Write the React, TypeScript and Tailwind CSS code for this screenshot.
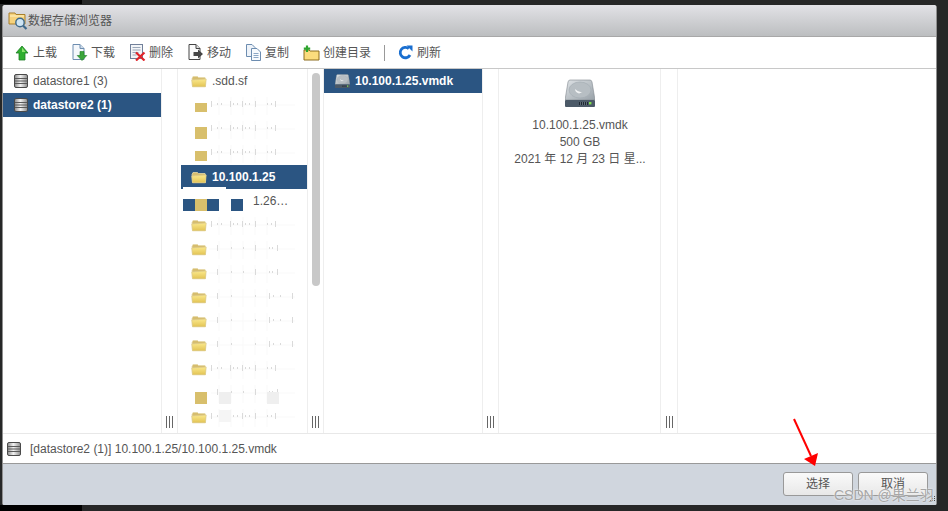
import React from "react";

const FONT = { fontFamily: '"Liberation Sans", "Noto Sans CJK SC", sans-serif' };

function Db({ className = "" }: { className?: string }) {
  return (
    <svg width="15" height="14" viewBox="0 0 15 14" className={className}>
      <defs>
        <linearGradient id="dbg" x1="0" x2="1" y1="0" y2="0">
          <stop offset="0" stopColor="#8a8a8a" />
          <stop offset="0.45" stopColor="#f2f2f2" />
          <stop offset="1" stopColor="#8e8e8e" />
        </linearGradient>
      </defs>
      <rect x="0.5" y="0.5" width="13" height="13" rx="1.5" fill="url(#dbg)" stroke="#4a4a4a" />
      <path d="M1 4.5h12M1 7h12M1 9.5h12" stroke="#5a5a5a" strokeWidth="1" />
    </svg>
  );
}

function Folder() {
  return (
    <svg width="16" height="13" viewBox="0 0 16 13" className="shrink-0">
      <defs>
        <linearGradient id="fog" x1="0" x2="0" y1="0" y2="1">
          <stop offset="0" stopColor="#fbe98c" />
          <stop offset="1" stopColor="#e2c354" />
        </linearGradient>
      </defs>
      <path d="M1 3.5 L2 1.5 H6.5 L7.5 2.5 H14 L14.5 4 V11.5 H1.5 Z" fill="#d6bd6f" stroke="#e6d9a8" strokeWidth="0.8" />
      <path d="M0.8 5 L15.2 4 L14.4 11.8 H1.5 Z" fill="url(#fog)" stroke="#dccb8c" strokeWidth="0.7" />
    </svg>
  );
}

function Disk({ size = 15 }: { size?: number }) {
  return (
    <svg width={size} height={(size * 28) / 30} viewBox="0 0 30 28" className="shrink-0">
      <defs>
        <linearGradient id="dg" x1="0" x2="1" y1="0" y2="1">
          <stop offset="0" stopColor="#dfe3e6" />
          <stop offset="1" stopColor="#98a1a8" />
        </linearGradient>
      </defs>
      <path d="M5 1 H25 Q26.5 1 27 3 L30 21 H0 L3 3 Q3.5 1 5 1 Z" fill="url(#dg)" stroke="#7f878d" strokeWidth="0.6" />
      <ellipse cx="15" cy="11" rx="11" ry="8" fill="#b7bec3" stroke="#a3abb1" strokeWidth="0.6" />
      <path d="M10 10 Q14 14 18 13 L14 14.5 Q10 13 10 10 Z" fill="#f1f3f4" />
      <rect x="0" y="21" width="30" height="7" rx="1" fill="#4b5967" />
      <rect x="14" y="23" width="9" height="3" fill="#1f2933" />
      <path d="M15.5 23v3M17.5 23v3M19.5 23v3M21.5 23v3" stroke="#8c99a5" strokeWidth="0.6" />
      <rect x="24" y="23" width="2.4" height="2.4" fill="#7fe04c" />
    </svg>
  );
}

function IconUp() {
  return (
    <svg width="16" height="16" viewBox="0 0 16 16">
      <path d="M8 1 L14 8 H11 V15 H5 V8 H2 Z" fill="#2fae2f" stroke="#1d7d24" strokeWidth="0.8" />
      <path d="M8 2.6 L11.5 7 H8 Z" fill="#8fe36f" />
    </svg>
  );
}
function Page({ children }: { children?: React.ReactNode }) {
  return (
    <svg width="17" height="17" viewBox="0 0 17 17">
      <path d="M2 0.5 H9 L13 4.5 V15.5 H2 Z" fill="#f4f7fb" stroke="#6d8db0" />
      <path d="M9 0.5 V4.5 H13" fill="#cfdcea" stroke="#6d8db0" />
      {children}
    </svg>
  );
}
function IconDown() {
  return (
    <Page>
      <path d="M9 7.5 H13 V11.5 H15.8 L11 16.5 L6.2 11.5 H9 Z" fill="#3ba53b" stroke="#1d7d24" strokeWidth="0.6" />
    </Page>
  );
}
function IconDelete() {
  return (
    <svg width="17" height="17" viewBox="0 0 17 17">
      <rect x="1.5" y="0.5" width="12" height="14" fill="#f3f5f8" stroke="#71809a" />
      <path d="M3.5 3.5h8M3.5 6h8M3.5 8.5h6M3.5 11h4" stroke="#9aa7b8" />
      <path d="M7 8.5 L15.5 16.5 M15.5 8.5 L7 16.5" stroke="#e0242a" strokeWidth="2.2" />
    </svg>
  );
}
function IconMove() {
  return (
    <svg width="17" height="17" viewBox="0 0 17 17">
      <path d="M2 0.5 H9 L13 4.5 V15.5 H2 Z" fill="#fafafa" stroke="#444" />
      <path d="M9 0.5 V4.5 H13" fill="#ddd" stroke="#444" />
      <path d="M6.5 8 H11 V5.5 L16 10 L11 14.5 V12 H6.5 Z" fill="#444" />
    </svg>
  );
}
function IconCopy() {
  return (
    <svg width="17" height="17" viewBox="0 0 17 17">
      <path d="M1.5 0.5 H7 L10 3.5 V12.5 H1.5 Z" fill="#eef3f9" stroke="#6d8db0" />
      <path d="M6.5 4.5 H12 L15.5 8 V16.5 H6.5 Z" fill="#f7fafd" stroke="#6d8db0" />
      <path d="M8.5 9.5h5M8.5 11.5h5M8.5 13.5h5" stroke="#8ba6c4" />
    </svg>
  );
}
function IconNewFolder() {
  return (
    <svg width="17" height="16" viewBox="0 0 17 16">
      <path d="M1 5 H6 L7 6 H16 V15 H1 Z" fill="#fbdc7d" stroke="#8c6d1f" />
      <path d="M4 0.5 V7 M0.8 3.7 H7.2" stroke="#2fa52f" strokeWidth="2.2" />
    </svg>
  );
}
function IconRefresh() {
  return (
    <svg width="15" height="15" viewBox="0 0 15 15">
      <path d="M12 10 A5.2 5.2 0 1 1 10.8 3.6" fill="none" stroke="#1a6fd0" strokeWidth="2.8" />
      <path d="M8.5 0.5 L14.5 0.5 L14.5 6.5 Z" fill="#1a6fd0" />
    </svg>
  );
}

function Tool({ icon, label, className = "" }: { icon: React.ReactNode; label: string; className?: string }) {
  return (
    <div className={`flex items-center gap-[3px] ${className}`}>
      <span className="flex w-[17px] justify-center">{icon}</span>
      <span>{label}</span>
    </div>
  );
}

function Grip() {
  return (
    <div className="mb-[5px] flex gap-[2px]">
      <span className="h-[12px] w-px bg-[#666]" />
      <span className="h-[12px] w-px bg-[#666]" />
      <span className="h-[12px] w-px bg-[#666]" />
    </div>
  );
}

function Splitter({ w, children }: { w: string; children?: React.ReactNode }) {
  return (
    <div className={`relative flex ${w} shrink-0 flex-col items-center justify-end border-r border-[#eeeeee]`}>
      {children}
      <Grip />
    </div>
  );
}

function Smudge({ ticks }: { ticks: number[] }) {
  return (
    <svg width="96" height="24" viewBox="0 0 96 24" className="shrink-0">
      <path d="M2 12h86M12 4v18M24 4v18M36 4v18M48 4v18M60 4v18" stroke="#f9f9f9" strokeWidth="1" />
      {ticks.map((x, i) => (
        <rect key={i} x={x} y={i % 3 === 0 ? 8 : 10} width="1" height={i % 3 === 0 ? 6 : 2} fill="#dadada" />
      ))}
    </svg>
  );
}

const T1 = [4, 10, 14, 23, 26, 30, 35, 38, 42, 48, 60, 64, 68];
const T2 = [10, 24, 36, 48, 62, 65, 70];
const T3 = [10, 24, 48, 62, 66, 73, 85];

function Row({ children, selected = false }: { children: React.ReactNode; selected?: boolean }) {
  return (
    <div className={`flex h-[24px] items-center ${selected ? "bg-[#2b5582] font-bold text-white" : ""}`}>{children}</div>
  );
}

function Patched({ top, h = 12, color = "bg-[#d8bf6c]", left = 14, w = 12 }: { top: number; h?: number; color?: string; left?: number; w?: number }) {
  return <span className={`absolute ${color}`} style={{ top, left, height: h, width: w }} />;
}

function FileRow({ ticks, patch }: { ticks: number[]; patch?: React.ReactNode }) {
  return (
    <div className="relative flex h-[24px] items-center pl-[10px]">
      <Folder />
      <Smudge ticks={ticks} />
      {patch}
    </div>
  );
}

const Mask = <span className="absolute left-0 top-0 h-[24px] w-[30px] bg-white" />;

export default function App() {
  return (
    <div className="relative h-[511px] w-[948px] overflow-hidden bg-[#262727] pl-[2px] pt-[5px] text-[12px] text-[#555]" style={FONT}>
      <div className="absolute left-0 top-0 h-[4px] w-[82px] bg-black" />
      <div className="absolute bottom-0 left-0 h-[6px] w-[82px] bg-black" />
      <div className="flex h-[500px] w-[935px] flex-col overflow-hidden rounded-t-[3px] rounded-b-[2px] border-x border-[#8f8f8f] bg-white">
        <div className="flex h-[32px] shrink-0 items-center gap-0 border-b border-[#a8a8a8] bg-gradient-to-b from-[#e2e2e6] to-[#bcbec0] pl-[5px]">
          <svg width="20" height="19" viewBox="0 0 20 19">
            <path d="M1 2 H7 L8 3.5 H17 V13 H1 Z" fill="#f6d27c" stroke="#a87f2c" />
            <path d="M2 5 H16" stroke="#fff2c4" />
            <circle cx="12" cy="11.5" r="4.2" fill="#cfe5f4" stroke="#3f6a8c" strokeWidth="1.4" />
            <path d="M15 14.5 L18.5 18" stroke="#3f6a8c" strokeWidth="2.2" />
          </svg>
          <span className="text-[12px] leading-none text-[#555]">数据存储浏览器</span>
        </div>
        <div className="flex h-[32px] shrink-0 items-center border-b border-[#c8c8c8] pl-[10px]">
          <Tool icon={<IconUp />} label="上载" />
          <Tool icon={<IconDown />} label="下载" className="ml-[14px]" />
          <Tool icon={<IconDelete />} label="删除" className="ml-[14px]" />
          <Tool icon={<IconMove />} label="移动" className="ml-[14px]" />
          <Tool icon={<IconCopy />} label="复制" className="ml-[14px]" />
          <Tool icon={<IconNewFolder />} label="创建目录" className="ml-[14px]" />
          <span className="ml-[13px] h-[16px] w-px bg-[#999]" />
          <Tool icon={<IconRefresh />} label="刷新" className="ml-[12px]" />
        </div>
        <div className="flex min-h-0 flex-1 border-b border-[#e8e8e8]">
          <div className="w-[159px] shrink-0 border-r border-[#eeeeee]">
            <Row>
              <span className="ml-[11px] mr-[4px] flex"><Db /></span>datastore1 (3)
            </Row>
            <Row selected>
              <span className="ml-[11px] mr-[4px] flex"><Db /></span>datastore2 (1)
            </Row>
          </div>
          <Splitter w="w-[16px]" />
          <div className="relative w-[130px] shrink-0 overflow-hidden border-r border-[#eeeeee] pl-[3px]">
            <div className="flex h-[24px] items-center pl-[10px]">
              <Folder />
              <span className="ml-[5px]">.sdd.sf</span>
            </div>
            <FileRow ticks={T1} patch={<>{Mask}<Patched top={10} h={9} /></>} />
            <FileRow ticks={T1} patch={<>{Mask}<Patched top={10} /></>} />
            <FileRow ticks={T1} patch={<>{Mask}<Patched top={10} h={10} /></>} />
            <Row selected>
              <span className="ml-[10px] mr-[5px] flex"><Folder /></span>10.100.1.25
            </Row>
            <div className="relative flex h-[24px] items-center">
              <span className="absolute left-[2px] top-[-2px] h-[10px] w-[43px] bg-white" />
              <span className="absolute left-[2px] top-[10px] h-[12px] w-[12px] bg-[#2b5582]" />
              <span className="absolute left-[14px] top-[10px] h-[12px] w-[12px] bg-[#d8bf6c]" />
              <span className="absolute left-[26px] top-[10px] h-[12px] w-[12px] bg-[#2b5582]" />
              <span className="absolute left-[50px] top-[10px] h-[12px] w-[12px] bg-[#2b5582]" />
              <span className="ml-[72px]">1.26…</span>
            </div>
            <FileRow ticks={T1} />
            <FileRow ticks={T2} />
            <FileRow ticks={T2} />
            <FileRow ticks={T3} />
            <FileRow ticks={T3} />
            <FileRow ticks={T3} />
            <FileRow ticks={T1} />
            <FileRow
              ticks={T2}
              patch={
                <>
                  {Mask}
                  <Patched top={11} />
                  <Patched top={11} left={38} color="bg-[#efefef]" />
                  <Patched top={11} left={86} color="bg-[#efefef]" />
                </>
              }
            />
            <FileRow ticks={T1} patch={<Patched top={5} left={38} h={12} color="bg-[#f5f5f5]" />} />
          </div>
          <Splitter w="w-[16px]">
            <span className="absolute left-[4px] top-[4px] h-[213px] w-[8px] rounded-[4px] bg-[#c8c8c8]" />
          </Splitter>
          <div className="w-[159px] shrink-0 border-r border-[#eeeeee]">
            <Row selected>
              <span className="ml-[11px] mr-[5px] flex"><Disk size={15} /></span>10.100.1.25.vmdk
            </Row>
          </div>
          <Splitter w="w-[16px]" />
          <div className="flex w-[162px] shrink-0 flex-col items-center border-r border-[#eeeeee] pl-px pt-[10px]">
            <Disk size={30} />
            <div className="mt-[10px] text-center leading-[17px]">
              <div>10.100.1.25.vmdk</div>
              <div>500 GB</div>
              <div>2021 年 12 月 23 日 星...</div>
            </div>
          </div>
          <Splitter w="w-[17px]" />
          <div className="flex-1" />
        </div>
        <div className="flex h-[30px] shrink-0 items-center gap-[8px] border-b border-[#999] pl-[4px]">
          <Db />
          <span>[datastore2 (1)] 10.100.1.25/10.100.1.25.vmdk</span>
        </div>
        <div className="relative flex h-[41px] shrink-0 items-start justify-end gap-[5px] bg-[#d0d6de] pr-[8px] pt-[8px]">
          <button className="h-[24px] w-[70px] rounded-[3px] border border-[#999] bg-gradient-to-b from-[#fafafa] to-[#e8e8e8] text-[12px] text-[#555]">选择</button>
          <button className="h-[24px] w-[70px] rounded-[3px] border border-[#999] bg-gradient-to-b from-[#fafafa] to-[#e8e8e8] text-[12px] text-[#555]">取消</button>
          <svg width="6" height="6" viewBox="0 0 6 6" className="absolute bottom-[3px] right-[1px]">
            <path d="M1 5h1v-1h-1zM3 5h1v-1h-1zM5 5h1v-1h-1zM3 3h1v-1h-1zM5 3h1v-1h-1zM5 1h1v-1h-1z" fill="#444" />
          </svg>
        </div>
      </div>
      <svg width="40" height="56" viewBox="0 0 40 56" className="absolute left-[785px] top-[415px]">
        <path d="M9 4 L26 41" stroke="#ff0000" strokeWidth="2" />
        <path d="M19 44 L33 38 L30 51 Z" fill="#ff0000" />
      </svg>
      <span className="absolute left-[834px] top-[487px] text-[14px] leading-[16px] text-[#a6a6a6] [text-shadow:0_0_2px_#ffffff]">CSDN @果兰羽</span>
    </div>
  );
}
